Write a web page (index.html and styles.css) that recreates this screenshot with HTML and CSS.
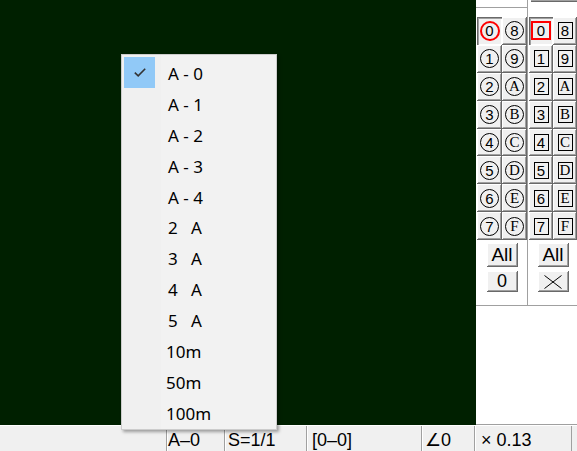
FILE: index.html
```html
<!DOCTYPE html>
<html lang="en">
<head>
  <meta charset="UTF-8" />
  <title>Viewer</title>
  <link rel="stylesheet" href="styles.css">
</head>
<body>

<div class="app">
  <div class="main">
    <div class="canvas"></div>

    <aside class="panel">
      <div class="groups">
        <div class="group">
          <div class="cap cap-line"></div>
          <div class="keys keys-left">
            <button class="key pressed"><span class="ring sel">0</span></button>
            <button class="key"><span class="ring">8</span></button>
            <button class="key"><span class="ring">1</span></button>
            <button class="key"><span class="ring">9</span></button>
            <button class="key"><span class="ring">2</span></button>
            <button class="key"><span class="ring serif">A</span></button>
            <button class="key"><span class="ring">3</span></button>
            <button class="key"><span class="ring serif">B</span></button>
            <button class="key"><span class="ring">4</span></button>
            <button class="key"><span class="ring serif">C</span></button>
            <button class="key"><span class="ring">5</span></button>
            <button class="key"><span class="ring serif">D</span></button>
            <button class="key"><span class="ring">6</span></button>
            <button class="key"><span class="ring serif">E</span></button>
            <button class="key"><span class="ring">7</span></button>
            <button class="key"><span class="ring serif">F</span></button>
          </div>
          <div class="actions">
            <button class="act">All</button>
            <button class="act act-low">0</button>
          </div>
        </div>

        <div class="divider"></div>

        <div class="group">
          <div class="cap cap-button"></div>
          <div class="keys keys-right">
            <button class="key pressed"><span class="box sel">0</span></button>
            <button class="key"><span class="box">8</span></button>
            <button class="key"><span class="box">1</span></button>
            <button class="key"><span class="box">9</span></button>
            <button class="key"><span class="box">2</span></button>
            <button class="key"><span class="box serif">A</span></button>
            <button class="key"><span class="box">3</span></button>
            <button class="key"><span class="box serif">B</span></button>
            <button class="key"><span class="box">4</span></button>
            <button class="key"><span class="box serif">C</span></button>
            <button class="key"><span class="box">5</span></button>
            <button class="key"><span class="box serif">D</span></button>
            <button class="key"><span class="box">6</span></button>
            <button class="key"><span class="box serif">E</span></button>
            <button class="key"><span class="box">7</span></button>
            <button class="key"><span class="box serif">F</span></button>
          </div>
          <div class="actions">
            <button class="act">All</button>
            <button class="act act-low">
              <svg width="18" height="14" viewBox="0 0 18 14"><path d="M0.5 0.5L17.5 13.5M17.5 0.5L0.5 13.5" stroke="#000" stroke-width="1" fill="none"/></svg>
            </button>
          </div>
        </div>
      </div>
    </aside>
  </div>

  <div class="status">
    <span class="cell cell-mode">A–0</span>
    <span class="cell cell-scale">S=1/1</span>
    <span class="cell cell-range">[0–0]</span>
    <span class="cell cell-angle">∠0</span>
    <span class="cell cell-zoom">× 0.13</span>
  </div>

  <!-- popup menu over canvas -->
  <ul class="menu">
    <li class="item checked">
      <span class="check"><svg width="12" height="9" viewBox="0 0 12 9"><path d="M0.8 4.6L4.2 7.8L11.2 0.8" stroke="#333" stroke-width="1.6" fill="none"/></svg></span>
      <span class="label">A - 0</span>
    </li>
    <li class="item"><span class="check"></span><span class="label">A - 1</span></li>
    <li class="item"><span class="check"></span><span class="label">A - 2</span></li>
    <li class="item"><span class="check"></span><span class="label">A - 3</span></li>
    <li class="item"><span class="check"></span><span class="label">A - 4</span></li>
    <li class="item"><span class="check"></span><span class="label">2   A</span></li>
    <li class="item"><span class="check"></span><span class="label">3   A</span></li>
    <li class="item"><span class="check"></span><span class="label">4   A</span></li>
    <li class="item"><span class="check"></span><span class="label">5   A</span></li>
    <li class="item"><span class="check"></span><span class="label tight">10m</span></li>
    <li class="item"><span class="check"></span><span class="label tight">50m</span></li>
    <li class="item"><span class="check"></span><span class="label tight">100m</span></li>
  </ul>
</div>

</body>
</html>
```

FILE: styles.css
```css
body {
  margin: 0;
  font-family: "Liberation Sans", Arial, sans-serif;
  background: #f0f0f0;
  overflow: hidden;
}
.app {
  position: relative;
  width: 577px;
  height: 451px;
}
.main {
  display: flex;
  height: 425px;
}
.canvas {
  width: 476px;
  background: #002000;
}
.panel {
  width: 101px;
  background: #fff;
  border-bottom: 1px solid #a0a0a0;
  box-sizing: border-box;
}
.groups {
  display: flex;
  height: 305px;
  border-bottom: 1px solid #a0a0a0;
}
.group {
  display: flex;
  flex-direction: column;
}
.group:first-child {
  width: 51px;
  padding-left: 1px;
  box-sizing: border-box;
}
.group:last-child {
  width: 48px;
}
.divider {
  width: 2px;
  background: #a0a0a0;
  border-right: 1px solid #fff;
  box-sizing: border-box;
}
.cap {
  height: 17px;
  box-sizing: border-box;
}
.cap-line {
  margin-left: -1px;
  background: linear-gradient(#fff 7px, #a0a0a0 7px, #a0a0a0 8px, #fff 8px);
}
.cap-button {
  margin-left: 2px;
  background: linear-gradient(#a0a0a0 0, #a0a0a0 1px, #696969 1px, #696969 2px, #fff 2px);
}
.keys {
  display: grid;
  grid-template-rows: repeat(8, 27.9px);
}
.keys-left {
  grid-template-columns: 25px 25px;
}
.keys-right {
  grid-template-columns: 24px 24px;
}
.key,
.act {
  border: 0;
  padding: 0;
  margin: 0;
  background: #f0f0f0;
  display: flex;
  align-items: center;
  justify-content: center;
  font-family: "Liberation Sans", Arial, sans-serif;
  color: #000;
  box-shadow: inset -1px -1px #696969, inset 1px 1px #fff, inset -2px -2px #a0a0a0;
}
.key.pressed {
  box-shadow: inset 1px 1px #696969, inset 2px 2px #a0a0a0, inset -1px -1px #fff;
}
.ring {
  width: 17px;
  height: 17px;
  border: 1px solid #000;
  border-radius: 50%;
  display: flex;
  align-items: center;
  justify-content: center;
  font-size: 15px;
  line-height: 1;
}
.ring.sel {
  width: 16px;
  height: 16px;
  border: 2px solid #f00;
}
.box {
  width: 13px;
  height: 15px;
  border: 1px solid #000;
  display: flex;
  align-items: center;
  justify-content: center;
  font-size: 15px;
  line-height: 1;
}
.box.sel {
  width: 16px;
  height: 15px;
  border: 2px solid #f00;
}
.serif {
  font-family: "Liberation Serif", "Times New Roman", serif;
  font-size: 15px;
}
.actions {
  display: flex;
  flex-direction: column;
  align-items: center;
  gap: 4px;
  margin-top: 3px;
}
.act {
  width: 31px;
  height: 24px;
  font-size: 19px;
}
.act-low {
  height: 21px;
  font-size: 18px;
}
.status {
  display: flex;
  justify-content: flex-end;
  height: 26px;
  padding-right: 5px;
  border-top: 1px solid #fff;
  box-sizing: border-box;
  font-size: 18px;
  line-height: 29px;
  color: #000;
}
.cell {
  box-sizing: border-box;
  height: 25px;
  padding-left: 3px;
  border-left: 1px solid #a0a0a0;
  box-shadow: inset 1px 0 #fff;
  white-space: nowrap;
  overflow: hidden;
}
.cell-mode { width: 58px; padding-left: 1px; }
.cell-scale { width: 82px; }
.cell-range { width: 115px; padding-left: 5px; }
.cell-angle { width: 53px; }
.cell-zoom {
  width: 98px;
  padding-left: 6px;
  border-right: 1px solid #a0a0a0;
}
.menu {
  position: absolute;
  left: 121px;
  top: 54px;
  width: 156px;
  box-sizing: border-box;
  margin: 0;
  padding: 2px 0 1px;
  list-style: none;
  border: 1px solid #cccccc;
  background: linear-gradient(to right, #f0f0f0 39px, #f2f2f2 39px);
  box-shadow: 2px 2px 3px rgba(0, 0, 0, 0.35);
  font-family: "Noto Sans", "Open Sans", sans-serif;
  font-size: 17px;
  color: #000;
}
.item {
  display: flex;
  align-items: center;
  height: 30.9px;
}
.check {
  width: 31px;
  height: 100%;
  margin-left: 2px;
  display: flex;
  align-items: center;
  justify-content: center;
}
.item.checked .check {
  background: #91c9f7;
}
.label {
  margin-left: 13px;
  padding-top: 2px;
  white-space: pre;
}
.label.tight {
  margin-left: 11px;
}
```
